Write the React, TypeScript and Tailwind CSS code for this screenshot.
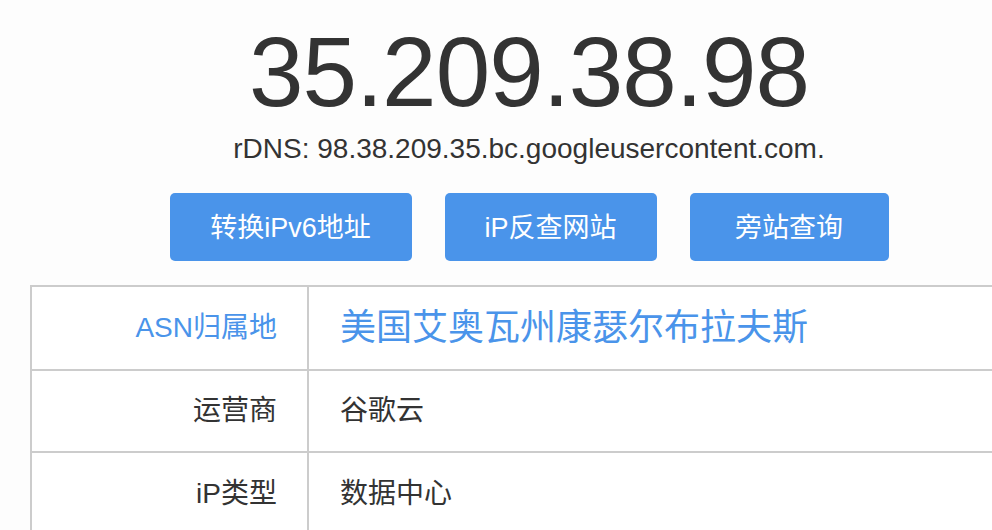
export default function App() {
  const font = { fontFamily: '"Liberation Sans", "Noto Sans CJK SC", sans-serif' };
  return (
    <div className="min-h-[530px] w-[992px] overflow-hidden bg-[#fdfdfd] text-[#333]" style={font}>
      <div className="ml-[30px] w-[998px] flex flex-col items-center">
        <h1 className="mt-[22px] text-[98px] leading-[100px] font-normal tracking-[-1px]">35.209.38.98</h1>
        <div className="mt-[11px] text-[28px] leading-[32px]">rDNS: 98.38.209.35.bc.googleusercontent.com.</div>
        <div className="mt-[28px] flex gap-[33px]">
          <button className="h-[68px] w-[242px] rounded-[5px] bg-[#4a94ea] pt-[3px] text-[27px] text-white">转换iPv6地址</button>
          <button className="h-[68px] w-[212px] rounded-[5px] bg-[#4a94ea] pt-[3px] text-[27px] text-white">iP反查网站</button>
          <button className="h-[68px] w-[199px] rounded-[5px] bg-[#4a94ea] pt-[3px] text-[27px] text-white">旁站查询</button>
        </div>
        <table className="mt-[24px] w-full border-collapse bg-white">
          <tbody>
            <tr className="h-[84px]">
              <td className="w-[277px] border-2 border-[#cccccc] pr-[30px] text-right text-[28px] text-[#4a94ea]">ASN归属地</td>
              <td className="border-2 border-[#cccccc] pl-[31px] text-[36px] text-[#4a94ea]">美国艾奥瓦州康瑟尔布拉夫斯</td>
            </tr>
            <tr className="h-[82px]">
              <td className="border-2 border-[#cccccc] pr-[30px] text-right text-[28px]">运营商</td>
              <td className="border-2 border-[#cccccc] pl-[31px] text-[28px]">谷歌云</td>
            </tr>
            <tr className="h-[83px]">
              <td className="border-2 border-[#cccccc] pr-[30px] text-right text-[28px]">iP类型</td>
              <td className="border-2 border-[#cccccc] pl-[31px] text-[28px]">数据中心</td>
            </tr>
          </tbody>
        </table>
      </div>
    </div>
  );
}
